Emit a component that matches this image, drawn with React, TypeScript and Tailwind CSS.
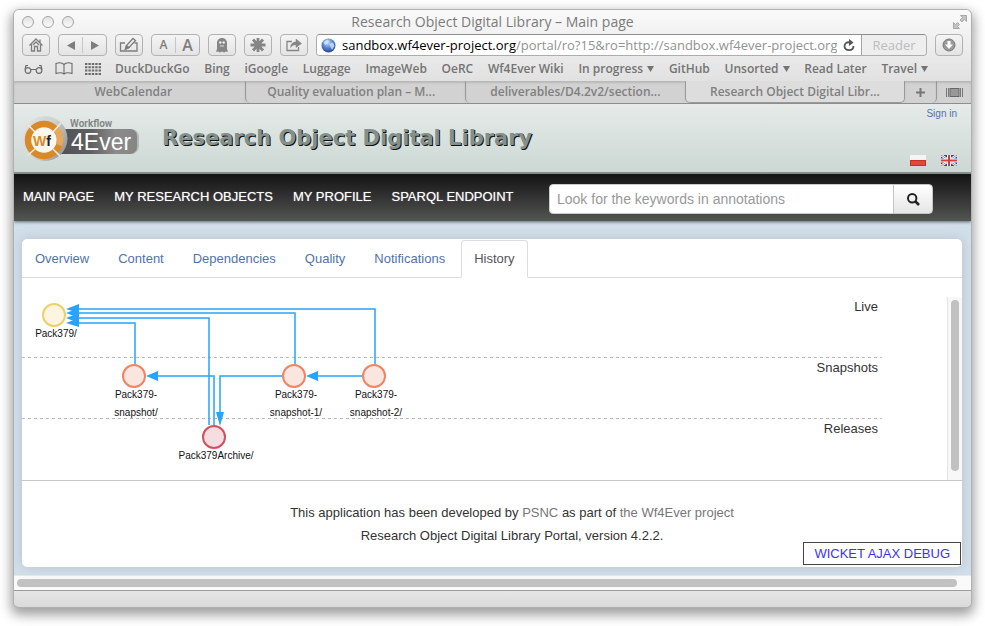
import React from "react";

const chrome = "font-['Open_Sans','Noto_Sans',sans-serif]";
const toolButton =
  "flex h-[22px] shrink-0 items-center justify-center rounded-[4px] border border-[#b2b2b2] bg-linear-to-b from-[#f4f4f4] to-[#e4e4e4] text-[#7d7d7d]";

function TrafficLight({ label }: { label: string }) {
  return (
    <button
      aria-label={label}
      className="size-3 rounded-full border border-[#a3a3a3] bg-linear-to-b from-[#e2e2e2] to-[#fafafa]"
    />
  );
}

function TitleBar() {
  return (
    <div className="flex h-6 items-center px-2">
      <div className="flex flex-1 gap-2">
        <TrafficLight label="Close" />
        <TrafficLight label="Minimise" />
        <TrafficLight label="Zoom" />
      </div>
      <div className="text-[14px] leading-5 text-[#7b7b7b]">
        Research Object Digital Library – Main page
      </div>
      <div className="flex flex-1 justify-end">
        <button aria-label="Full screen" className="-mr-1">
          <svg width="14" height="14" viewBox="0 0 14 14" fill="#c4c4c4" stroke="#9a9a9a" strokeWidth=".8">
            <path d="M7.500 .5H13.500V6.500L11.500 4.500L9 7L7 5L9.500 2.500Z" />
            <path d="M.5 7.500V13.500H6.500L4.500 11.500L6.500 9.500L4.500 7.500L2.500 9.500Z" />
          </svg>
        </button>
      </div>
    </div>
  );
}

function ToolBar() {
  return (
    <div className="flex gap-2 px-2">
      <button aria-label="Home" className={`${toolButton} w-7`}>
        <svg width="16" height="16" viewBox="0 0 16 16" fill="none" stroke="currentColor" strokeWidth="1.300">
          <path d="M1.500 8.500L8 2L14.500 8.500M3.500 7.500V14H6.500V9.500H9.500V14H12.500V7.500M12 5.500V2.500" />
          <path d="M5 8L8 5L11 8" />
        </svg>
      </button>
      <div className={`${toolButton} w-[49px]`}>
        <button aria-label="Back" className="flex h-4 flex-1 items-center justify-center border-r border-[#c6c6c6]">
          <svg width="8" height="9" fill="currentColor"><path d="M8 0V9L0 4.500Z" /></svg>
        </button>
        <button aria-label="Forward" className="flex h-4 flex-1 items-center justify-center">
          <svg width="8" height="9" fill="currentColor"><path d="M0 0V9L8 4.500Z" /></svg>
        </button>
      </div>
      <button aria-label="Compose" className={`${toolButton} w-7`}>
        <svg width="20" height="16" viewBox="0 0 20 16" fill="none" stroke="currentColor" strokeWidth="1.300">
          <path d="M6 6H1.500V14H18V6H15.500" />
          <path d="M6.500 12L7.500 8.500L14 1.500L16.500 3.500L10 10.500Z" />
          <path d="M6.500 12L7.500 8.500L10 10.500Z" fill="currentColor" />
        </svg>
      </button>
      <div className={`${toolButton} w-[49px] font-semibold`}>
        <button aria-label="Smaller text" className="h-4 flex-1 border-r border-[#c6c6c6] text-[12px] leading-4">
          A
        </button>
        <button aria-label="Larger text" className="h-4 flex-1 text-[16px] leading-4">
          A
        </button>
      </div>
      <button aria-label="Ghostery" className={`${toolButton} w-7`}>
        <svg width="16" height="17" viewBox="0 0 16 17">
          <path d="M3 6C3 -.8 13 -.8 13 6V12L14 15L12 14.500L10 15.500L8 14.500L6 15.500L4 14.500L2 15L3 12Z" fill="#858585" />
          <circle cx="6.300" cy="5.500" r="1.200" fill="#eee" />
          <circle cx="9.700" cy="5.500" r="1.200" fill="#eee" />
          <path d="M6 9H10" stroke="#ddd" />
        </svg>
      </button>
      <button aria-label="Extensions" className={`${toolButton} w-7`}>
        <svg width="16" height="16" viewBox="0 0 16 16" stroke="#858585" strokeWidth="2.800">
          <path d="M8 1V15M.5 8H15.500M3 2.500L13 13.500M13 2.500L3 13.500" />
        </svg>
      </button>
      <button aria-label="Share" className={`${toolButton} w-7`}>
        <svg width="18" height="16" viewBox="0 0 18 16" fill="none" stroke="#858585" strokeWidth="1.300">
          <path d="M7 4.500H2V13.500H13.500V10" />
          <path d="M5.500 10.500C6 6.500 8 5 11 5V2L16.500 6.500L11 10.500V7.800C8.500 7.800 7 8.500 5.500 10.500Z" fill="#858585" strokeWidth=".5" />
        </svg>
      </button>
      <div className="flex h-[22px] min-w-0 flex-1 overflow-hidden rounded-[4px] border border-[#adadad] border-t-[#8d8d8d]">
        <div className="flex min-w-0 flex-1 items-center border-r border-[#a5a5a5] bg-white pl-1">
          <svg className="mr-1.5 shrink-0" width="15" height="15" viewBox="0 0 15 15">
            <defs>
              <radialGradient id="globe" cx=".45" cy=".3" r=".75">
                <stop offset="0" stopColor="#c5dcfa" />
                <stop offset=".5" stopColor="#5585d2" />
                <stop offset="1" stopColor="#1c3f8d" />
              </radialGradient>
            </defs>
            <circle cx="7.500" cy="7.500" r="7" fill="url(#globe)" />
            <path d="M2.500 4L6 1.500L8 3L6.500 5.500L4 7ZM8.500 6L12 4.500L13.500 8L11 12L9.500 9Z" fill="#dceafd" opacity=".75" />
          </svg>
          <div className="min-w-0 flex-1 overflow-hidden text-[13px] leading-5 whitespace-nowrap text-[#929292]">
            <span className="text-black">sandbox.wf4ever-project.org</span>
            /portal/ro?15&amp;ro=http://sandbox.wf4ever-project.org
          </div>
          <button aria-label="Reload" className="mx-1.5 shrink-0">
            <svg width="12" height="13" viewBox="0 0 12 13" fill="none" stroke="#555" strokeWidth="1.800">
              <path d="M7 3.500C3.500 2.500 1.500 5 1.500 7.200C1.500 12.500 10.500 12.500 10.500 7" />
              <path d="M6 0V7L10.500 3.500Z" fill="#555" stroke="none" />
            </svg>
          </button>
        </div>
        <button className="w-16 shrink-0 bg-[#eeeeee] text-[13px] leading-5 text-[#bcbcbc]">Reader</button>
      </div>
      <button aria-label="Downloads" className={`${toolButton} w-7`}>
        <svg width="14" height="14" viewBox="0 0 14 14">
          <circle cx="7" cy="7" r="6" fill="#999" stroke="#777" />
          <path d="M5.500 3H8.500V6.500H11L7 11L3 6.500H5.500Z" fill="#fff" />
        </svg>
      </button>
    </div>
  );
}

const bookmarks: { name: string; menu?: boolean }[] = [
  { name: "DuckDuckGo" },
  { name: "Bing" },
  { name: "iGoogle" },
  { name: "Luggage" },
  { name: "ImageWeb" },
  { name: "OeRC" },
  { name: "Wf4Ever Wiki" },
  { name: "In progress", menu: true },
  { name: "GitHub" },
  { name: "Unsorted", menu: true },
  { name: "Read Later" },
  { name: "Travel", menu: true },
];

function BookmarksBar() {
  return (
    <div className="flex h-[25px] items-center pr-[43px] pl-2.5">
      <div className="mr-[14px] flex shrink-0 items-center gap-3 text-[#6b6b6b]">
        <svg width="19" height="10" viewBox="0 0 19 10" fill="none" stroke="currentColor" strokeWidth="1.200">
          <circle cx="4" cy="6.500" r="2.800" />
          <circle cx="15" cy="6.500" r="2.800" />
          <path d="M7 5.500H12M1 5.500L2 1.500H4M18 5.500L17 1.500H15" />
        </svg>
        <svg width="18" height="13" viewBox="0 0 18 13" fill="none" stroke="currentColor" strokeWidth="1.100">
          <path d="M9 2.500C7 .5 4 .5 1 1.500V11.500C4 10.500 7 10.500 9 12C11 10.500 14 10.500 17 11.500V1.500C14 .5 11 .5 9 2.500V12" />
        </svg>
        <svg width="16" height="12" viewBox="0 0 16 12" stroke="currentColor" strokeWidth="2" strokeDasharray="2.400 1">
          <path d="M0 1H16M0 4.300H16M0 7.600H16M0 10.900H16" />
        </svg>
      </div>
      <div className="flex min-w-0 flex-1 justify-between text-[12px] leading-4 font-semibold whitespace-nowrap text-[#747474]">
        {bookmarks.map((b) => (
          <a key={b.name} href="#" className="flex items-center gap-1">
            {b.name}
            {b.menu && (
              <svg width="7" height="6" fill="currentColor"><path d="M0 0H7L3.500 6Z" /></svg>
            )}
          </a>
        ))}
      </div>
    </div>
  );
}

const tabBase = "flex h-[22px] items-center justify-center";
const backTab = "rounded-bl-[5px] border-l border-[#9a9a9a] shadow-[inset_0_2px_2px_#b9b9b9]";

function BrowserTabs() {
  return (
    <div className="flex border-b border-[#8d8d8d] bg-[#d2d2d2] text-[12px] leading-4 font-semibold whitespace-nowrap text-[#808080]">
      <button className={`${tabBase} min-w-0 flex-1 pl-2 shadow-[inset_0_2px_2px_#b9b9b9]`}>WebCalendar</button>
      <button className={`${tabBase} ${backTab} w-[23%] pr-2`}>Quality evaluation plan – M...</button>
      <button className={`${tabBase} ${backTab} w-[23%]`}>deliverables/D4.2v2/section...</button>
      <button className={`${tabBase} w-[23%] rounded-b-[5px] border-x border-b border-[#9a9a9a] bg-[#dddddd]`}>
        Research Object Digital Libr...
      </button>
      <button aria-label="New tab" className={`${tabBase} w-8 rounded-br-[5px] border-r border-[#9a9a9a] shadow-[inset_0_2px_2px_#b9b9b9]`}>
        <svg width="9" height="9" stroke="#777" strokeWidth="2"><path d="M4.500 0V9M0 4.500H9" /></svg>
      </button>
      <button aria-label="Show all tabs" className={`${tabBase} w-[34px] shadow-[inset_0_2px_2px_#b9b9b9]`}>
        <svg width="17" height="9">
          <rect x="4" y=".5" width="9" height="8" fill="#999" stroke="#666" />
          <path d="M.5 0V9M2.500 0V9M14.500 0V9M16.500 0V9" stroke="#777" />
        </svg>
      </button>
    </div>
  );
}

function Logo() {
  return (
    <svg width="120" height="50" viewBox="0 0 120 50" role="img" aria-label="Workflow 4Ever">
      <defs>
        <linearGradient id="plate" x1="0" x2="1">
          <stop offset="0" stopColor="#4e4e50" />
          <stop offset=".45" stopColor="#5f5f61" />
          <stop offset=".75" stopColor="#8b8b8b" />
          <stop offset="1" stopColor="#858585" />
        </linearGradient>
        <linearGradient id="rim" x1="0" x2="1" y1="0" y2=".6">
          <stop offset="0" stopColor="#e3e5e6" />
          <stop offset=".6" stopColor="#cdd0d1" />
          <stop offset="1" stopColor="#9b9e9f" />
        </linearGradient>
      </defs>
      <rect x="30" y="15" width="87" height="25" rx="8" fill="#b4b8b7" />
      <rect x="30" y="15" width="85" height="25" rx="7" fill="url(#plate)" />
      <circle cx="23" cy="24.500" r="22.500" fill="url(#rim)" />
      <circle cx="22" cy="26" r="16" fill="#fbf7ef" stroke="#d98a26" strokeWidth="6.500" />
      <path d="M33.500 14A16 16 0 0 1 37 31" fill="none" stroke="#e5aa5d" strokeWidth="6.500" />
      <path d="M6 11L13 18M31 18L39 9M6 41L13 35M31 35L38 42" stroke="#f0ece4" strokeWidth="1.500" />
      <text x="11" y="32" fontSize="14" fontWeight="700" fill="#d98a26" className="font-['Liberation_Sans',sans-serif]">
        W<tspan fill="#222">f</tspan>
      </text>
      <text x="48" y="13" fontSize="10" fontWeight="600" fill="#808483" className="font-['Roboto',sans-serif]">
        Workflow
      </text>
      <text x="49" y="36" fontSize="23" fill="#fff" className="font-['Liberation_Sans',sans-serif]">
        4Ever
      </text>
    </svg>
  );
}

function SiteHeader() {
  return (
    <header className="flex h-[70px] items-stretch border-b-2 border-[#8b928f] bg-linear-to-b from-[#e6ebe9] to-[#ccd8d3] pr-[14px] pl-2">
      <div className="flex items-start pt-2.5">
        <Logo />
      </div>
      <h1 className="ml-5 flex-1 pt-[18px] font-['DejaVu_Sans',sans-serif] text-[21px] leading-8 font-bold whitespace-nowrap text-[#84908b] [text-shadow:1px_1px_0_#111]">
        Research Object Digital Library
      </h1>
      <div className="flex flex-col items-end justify-between pt-0.5 pb-1.5">
        <a href="#" className="text-[10px] leading-4 text-[#5273a8]">Sign in</a>
        <div className="flex gap-[15px]">
          <button aria-label="Polski">
            <svg width="16" height="11">
              <rect width="16" height="11" fill="#c9301f" />
              <rect width="16" height="5" fill="#f6f3f3" />
              <rect x="1" y="6" width="14" height="4" fill="#dc4a38" />
            </svg>
          </button>
          <button aria-label="English">
            <svg width="16" height="11" viewBox="0 0 16 11">
              <rect width="16" height="11" fill="#33459a" />
              <path d="M0 0L16 11M16 0L0 11" stroke="#fff" strokeWidth="2.400" />
              <path d="M0 0L16 11M16 0L0 11" stroke="#d84a4a" strokeWidth=".8" />
              <path d="M8 0V11M0 5.500H16" stroke="#fff" strokeWidth="4" />
              <path d="M8 0V11M0 5.500H16" stroke="#dc3a33" strokeWidth="2" />
            </svg>
          </button>
        </div>
      </div>
    </header>
  );
}

function MainNav() {
  return (
    <nav className="relative flex h-[47px] items-center justify-between bg-linear-to-b from-[#141414] via-[#333333] to-[#535652] pr-[38px] pl-[9px] shadow-[0_1px_3px_#60666c]">
      <div className="mb-0.5 flex gap-5 text-[13px] leading-5 whitespace-nowrap text-white [text-shadow:0_0_1px_#ffffff90]">
        <a href="#">MAIN PAGE</a>
        <a href="#">MY RESEARCH OBJECTS</a>
        <a href="#">MY PROFILE</a>
        <a href="#">SPARQL ENDPOINT</a>
      </div>
      <form className="mt-[3px] flex h-[30px] w-[384px]" onSubmit={(e) => e.preventDefault()}>
        <input
          type="text"
          aria-label="Search"
          placeholder="Look for the keywords in annotations"
          className="min-w-0 flex-1 rounded-l-[4px] border border-[#cccccc] bg-white px-[7px] text-[14px] leading-5 text-[#333] placeholder:text-[#999999]"
        />
        <button
          aria-label="Submit search"
          className="-ml-px flex w-10 items-center justify-center rounded-r-[4px] border border-[#c4c4c4] bg-linear-to-b from-white to-[#e6e6e6]"
        >
          <svg width="13" height="13" viewBox="0 0 13 13" fill="none" stroke="#222">
            <circle cx="5.200" cy="5.200" r="4.200" strokeWidth="2" />
            <path d="M8.500 8.500L12 12" strokeWidth="2.600" />
          </svg>
        </button>
      </form>
    </nav>
  );
}

const sections = ["Overview", "Content", "Dependencies", "Quality", "Notifications", "History"];

function SectionTabs() {
  return (
    <div className="flex gap-[3px] border-b border-[#dddddd] text-[13px] leading-5">
      {sections.map((s) => (
        <a
          key={s}
          href="#"
          className={
            s === "History"
              ? "-mb-px rounded-t-[4px] border border-[#dddddd] border-b-white bg-white px-3 pt-2 pb-2 text-[#555555]"
              : "border-x border-t border-transparent px-3 pt-2 pb-2 text-[#5273a8]"
          }
        >
          {s}
        </a>
      ))}
    </div>
  );
}

const nodes = [
  { x: 32, y: 18, fill: "#fdf5e2", stroke: "#ecd068", lines: ["Pack379/"], tx: 34 },
  { x: 112, y: 79, fill: "#fae6df", stroke: "#ee8465", lines: ["Pack379-", "snapshot/"], tx: 114 },
  { x: 272, y: 79, fill: "#fae6df", stroke: "#ee8465", lines: ["Pack379-", "snapshot-1/"], tx: 274 },
  { x: 352, y: 79, fill: "#fae6df", stroke: "#ee8465", lines: ["Pack379-", "snapshot-2/"], tx: 354 },
  { x: 192, y: 140, fill: "#f6dde1", stroke: "#d2505f", lines: ["Pack379Archive/"], tx: 194 },
];

function HistoryGraph() {
  return (
    <svg className="absolute top-0 left-0" width="500" height="183" role="img" aria-label="Version history">
      <g fill="none" stroke="#27a3fc" strokeWidth="1.500">
        <path d="M56 12H353V67" />
        <path d="M56 16H273V67" />
        <path d="M56 21H187V128" />
        <path d="M56 26H113V67" />
        <path d="M136 79H192V128" />
        <path d="M260 79H198V118" />
        <path d="M296 79H340" />
      </g>
      <g fill="#27a3fc">
        <path d="M44 12L57 7V16Z" />
        <path d="M44 16L57 11V21Z" />
        <path d="M44 21L57 16V26Z" />
        <path d="M44 26L57 21V30Z" />
        <path d="M124 79L136 74V84Z" />
        <path d="M284 79L296 74V84Z" />
        <path d="M198 129L194 115H202Z" />
      </g>
      {nodes.map((n) => (
        <g key={n.x}>
          <circle cx={n.x} cy={n.y} r="11" fill={n.fill} stroke={n.stroke} strokeWidth="2" />
          {n.lines.map((line, i) => (
            <text key={line} x={n.tx} y={n.y + 22 + i * 18} textAnchor="middle" fontSize="10" fill="#111">
              {line}
            </text>
          ))}
        </g>
      ))}
    </svg>
  );
}

const laneLine =
  "bg-[repeating-linear-gradient(to_right,#b9b9b9_0_3px,transparent_3px_6px)] bg-[length:100%_1px] bg-bottom bg-no-repeat";

function HistoryPanel() {
  return (
    <div className="mt-[19px] flex border-b border-[#c6c6c6] text-[13px] leading-5 text-[#333333]">
      <div className="relative mr-[65px] flex-1 text-right">
        <div className={`h-[61px] pr-1 ${laneLine}`}>Live</div>
        <div className={`h-[61px] pr-1 ${laneLine}`}>Snapshots</div>
        <div className="h-[61px] pr-1">Releases</div>
        <HistoryGraph />
      </div>
      <div className="w-[15px] border-l border-[#e3e3e3] bg-[#f8f8f8] pt-[3px] pb-[9px] pl-[3px]">
        <div className="h-full w-2 rounded-full bg-[#c1c1c1]" />
      </div>
    </div>
  );
}

export default function App() {
  return (
    <div className="min-h-screen bg-white px-[14px] pt-2.5 pb-4 font-['Liberation_Sans',Arial,sans-serif]">
      <div className="overflow-hidden rounded-[5px] bg-[#dedede] shadow-[0_0_0_1px_#b0b0b0,0_5px_12px_3px_#00000060]">
        <div className={`bg-linear-to-b from-[#fafafa] to-[#d9d9d9] ${chrome}`}>
          <TitleBar />
          <ToolBar />
          <BookmarksBar />
          <BrowserTabs />
        </div>
        <SiteHeader />
        <MainNav />
        <main className="bg-[#d1dfeb] px-2 pt-[18px] pb-2">
          <div className="relative mr-px rounded-[5px] bg-white shadow-[0_0_12px_#b8bfc7]">
            <div className="pt-px">
              <SectionTabs />
            </div>
            <HistoryPanel />
            <footer className="pt-5 pb-5 pl-10 text-center text-[13px] leading-[23px] text-[#333333]">
              <p>
                This application has been developed by <a href="#" className="text-[#777777]">PSNC</a> as part of{" "}
                <a href="#" className="text-[#777777]">the Wf4Ever project</a>
              </p>
              <p>Research Object Digital Library Portal, version 4.2.2.</p>
            </footer>
            <a
              href="#"
              className="absolute right-px bottom-0.5 border border-[#444] bg-white px-2.5 text-[13px] leading-[21px] text-[#3c32f5]"
            >
              WICKET AJAX DEBUG
            </a>
          </div>
        </main>
        <div className="h-[15px] border-t border-[#e8e8e8] bg-[#fafafa] py-[3px] pr-[14px] pl-[3px]">
          <div className="h-2 rounded-full bg-[#c1c1c1]" />
        </div>
        <div className="h-[17px] border-t border-[#9c9c9c] bg-linear-to-b from-[#e6e6e6] to-[#dadada]" />
      </div>
    </div>
  );
}
